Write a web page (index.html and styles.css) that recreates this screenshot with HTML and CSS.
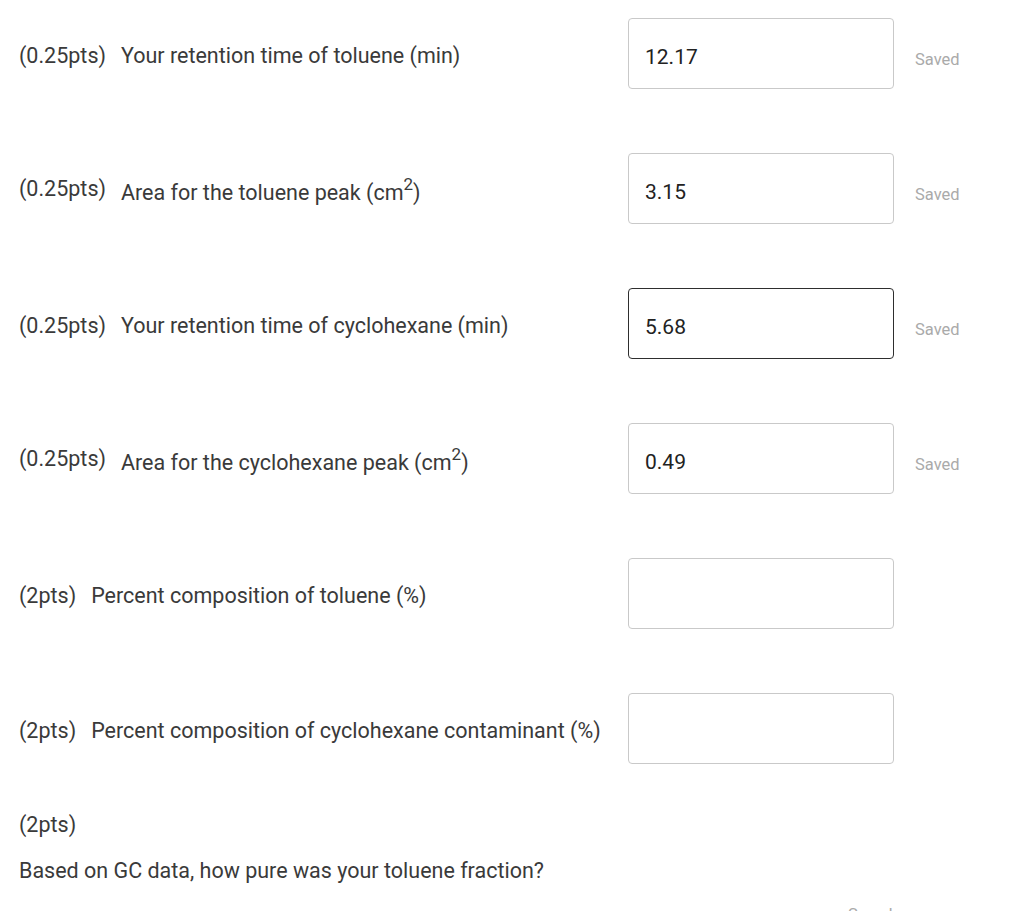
FILE: index.html
```html
<!DOCTYPE html>
<html>
<head>
<meta charset="utf-8">
<title>GC data</title>
<link rel="stylesheet" href="styles.css">
</head>
<body>
<div class="quiz">
	<div class="q-row">
		<div class="q-label"><span class="q-pts">(0.25pts)</span><span class="q-text">Your retention time of toluene (min)</span></div>
		<div class="q-field"><input class="q-input" value="12.17" /></div>
		<div class="q-saved">Saved</div>
	</div>
	<div class="q-row">
		<div class="q-label"><span class="q-pts">(0.25pts)</span><span class="q-text">Area for the toluene peak (cm<sup>2</sup>)</span></div>
		<div class="q-field"><input class="q-input" value="3.15" /></div>
		<div class="q-saved">Saved</div>
	</div>
	<div class="q-row">
		<div class="q-label"><span class="q-pts">(0.25pts)</span><span class="q-text">Your retention time of cyclohexane (min)</span></div>
		<div class="q-field"><input class="q-input q-active" value="5.68" /></div>
		<div class="q-saved">Saved</div>
	</div>
	<div class="q-row">
		<div class="q-label"><span class="q-pts">(0.25pts)</span><span class="q-text">Area for the cyclohexane peak (cm<sup>2</sup>)</span></div>
		<div class="q-field"><input class="q-input" value="0.49" /></div>
		<div class="q-saved">Saved</div>
	</div>
	<div class="q-row">
		<div class="q-label"><span class="q-pts">(2pts)</span><span class="q-text">Percent composition of toluene (%)</span></div>
		<div class="q-field"><input class="q-input" value="" /></div>
	</div>
	<div class="q-row q-row-last">
		<div class="q-label"><span class="q-pts">(2pts)</span><span class="q-text">Percent composition of cyclohexane contaminant (%)</span></div>
		<div class="q-field"><input class="q-input" value="" /></div>
	</div>
	<div class="q-block">
		<p class="q-pts-line">(2pts)</p>
		<p class="q-question">Based on GC data, how pure was your toluene fraction?</p>
		<div class="q-saved q-saved-low">Saved</div>
	</div>
</div>
</body>
</html>
```
FILE: styles.css
```css
*{margin: 0;padding: 0;box-sizing: border-box;}
html,body{height: 100%;}
body{background-color: #fff;font-family: Roboto,"Liberation Sans",sans-serif;color: #3a3a3a;overflow: hidden;}
.quiz{padding: 18px 0 0 19px;}
.q-row{display: flex;align-items: center;height: 71px;margin-bottom: 64px;}
.q-row-last{margin-bottom: 48px;}
.q-label{width: 609px;display: flex;align-items: flex-start;font-size: 21.5px;line-height: 25px;padding-top: 3px;}
.q-pts{margin-right: 15px;}
.q-text sup{font-size: 17px;line-height: 17px;vertical-align: 10px;}
.q-field{width: 266px;}
.q-input{width: 100%;height: 71px;border: 1px solid #c9c9c9;border-radius: 4px;padding: 7px 16px 0;font-family: Roboto,"Liberation Sans",sans-serif;font-size: 21px;color: #222;outline: 0;background: #fff;}
.q-active{border-color: #2e2e2e;}
.q-saved{padding-left: 21px;padding-top: 12px;font-size: 16.5px;color: #aaa;}
.q-block{position: relative;font-size: 21.5px;line-height: 25px;}
.q-pts-line{margin-bottom: 21px;}
.q-saved-low{position: absolute;left: 829px;top: 90px;padding: 0;}
```
